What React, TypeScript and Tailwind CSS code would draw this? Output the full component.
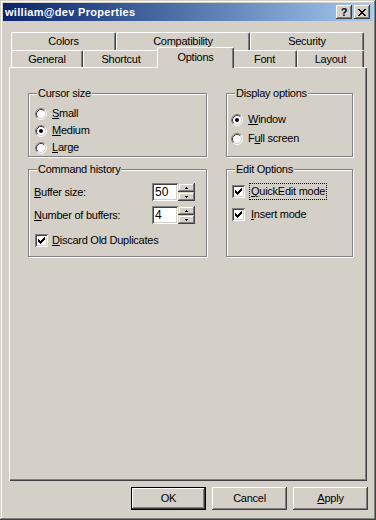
import React from 'react';

function Radio({ checked }: { checked?: boolean }) {
  return (
    <svg width="12" height="12" viewBox="0 0 12 12" className="shrink-0">
      <circle cx="6" cy="6" r="4.5" fill="#ffffff" />
      <path d="M2.11 9.89A5.5 5.5 0 0 1 9.89 2.11" stroke="#808080" fill="none" />
      <path d="M9.89 2.11A5.5 5.5 0 0 1 2.11 9.89" stroke="#ffffff" fill="none" />
      <path d="M2.82 9.18A4.5 4.5 0 0 1 9.18 2.82" stroke="#404040" fill="none" />
      <path d="M9.18 2.82A4.5 4.5 0 0 1 2.82 9.18" stroke="#d4d0c8" fill="none" />
      {checked && <circle cx="6" cy="6" r="2" fill="#000000" />}
    </svg>
  );
}

function Check() {
  return (
    <div className="w-[13px] h-[13px] shrink-0 bg-white flex items-center justify-center shadow-[inset_1px_1px_#808080,inset_-1px_-1px_#ffffff,inset_2px_2px_#404040,inset_-2px_-2px_#d4d0c8]">
      <svg width="7" height="7" viewBox="0 0 7 7" shapeRendering="crispEdges">
        <path
          fill="#000"
          d="M6 0h1v1h-1z M5 1h2v1h-2z M0 2h1v1h-1z M4 2h3v1h-3z M0 3h2v1h-2z M3 3h3v1h-3z M0 4h5v1h-5z M1 5h3v1h-3z M2 6h1v1h-1z"
        />
      </svg>
    </div>
  );
}

function Group({
  title,
  className,
  children,
}: {
  title: string;
  className: string;
  children?: React.ReactNode;
}) {
  return (
    <div className={`relative border border-[#808080] shadow-[inset_1px_1px_#ffffff,1px_1px_#ffffff] ${className}`}>
      <span className="absolute left-[8px] -top-[7px] px-[1px] bg-[#d4d0c8] leading-[13px]">{title}</span>
      {children}
    </div>
  );
}

function SpinHalf({ up }: { up?: boolean }) {
  return (
    <div className="h-[9px] flex items-center justify-center bg-[#d4d0c8] shadow-[inset_-1px_-1px_#404040,inset_1px_1px_#d4d0c8,inset_-2px_-2px_#808080,inset_2px_2px_#ffffff]">
      <svg width="3" height="2" viewBox="0 0 3 2" shapeRendering="crispEdges">
        <path fill="#000" d={up ? 'M1 0h1v1h-1z M0 1h3v1h-3z' : 'M0 0h3v1h-3z M1 1h1v1h-1z'} />
      </svg>
    </div>
  );
}

function SpinEdit({ value }: { value: string }) {
  return (
    <div className="flex">
      <div className="w-[26px] h-[18px] bg-white flex items-center pl-[3px] shadow-[inset_1px_1px_#808080,inset_-1px_-1px_#ffffff,inset_2px_2px_#404040,inset_-2px_-2px_#d4d0c8]">
        <span className="text-[12px] tracking-normal">{value}</span>
      </div>
      <div className="w-[17px] flex flex-col">
        <SpinHalf up />
        <SpinHalf />
      </div>
    </div>
  );
}

const tabBase =
  'flex items-center justify-center bg-[#d4d0c8] border-t border-l border-white border-r border-r-[#404040] rounded-tl-[2px] rounded-tr-[2px] shadow-[inset_-1px_0_#808080]';

export default function App() {
  return (
    <div className="w-[376px] h-[520px] bg-[#d4d0c8] p-[3px] flex flex-col text-black text-[11px] leading-[13px] tracking-[-0.25px] [font-family:'Liberation_Sans',Arial,sans-serif] shadow-[inset_-1px_-1px_#404040,inset_1px_1px_#d4d0c8,inset_-2px_-2px_#808080,inset_2px_2px_#ffffff]">
      {/* Title bar */}
      <div className="h-[18px] shrink-0 flex items-center justify-between bg-linear-to-r from-[#0a246a] to-[#a6caf0] pl-[2px] pr-[3px]">
        <span className="text-white font-bold text-[11px] tracking-[0.3px]">william@dev Properties</span>
        <div className="flex gap-[2px]">
          <div className="w-[16px] h-[14px] flex items-center justify-center bg-[#d4d0c8] shadow-[inset_-1px_-1px_#404040,inset_1px_1px_#ffffff,inset_-2px_-2px_#808080]">
            <span className="font-bold text-[11px] leading-[11px] tracking-normal">?</span>
          </div>
          <div className="w-[16px] h-[14px] flex items-center justify-center bg-[#d4d0c8] shadow-[inset_-1px_-1px_#404040,inset_1px_1px_#ffffff,inset_-2px_-2px_#808080]">
            <svg width="8" height="7" viewBox="0 0 8 7" shapeRendering="crispEdges">
              <path
                fill="#000"
                d="M0 0h2v1h-2z M6 0h2v1h-2z M1 1h2v1h-2z M5 1h2v1h-2z M2 2h4v1h-4z M3 3h2v1h-2z M2 4h4v1h-4z M1 5h2v1h-2z M5 5h2v1h-2z M0 6h2v1h-2z M6 6h2v1h-2z"
              />
            </svg>
          </div>
        </div>
      </div>

      {/* Back row of tabs */}
      <div className="ml-[8px] mt-[11px] flex h-[18px] shrink-0">
        <div className={`${tabBase} w-[105px]`}>Colors</div>
        <div className={`${tabBase} w-[134px]`}>Compatibility</div>
        <div className={`${tabBase} w-[114px]`}>Security</div>
      </div>

      {/* Front row of tabs */}
      <div className="ml-[8px] flex h-[17px] items-end shrink-0">
        <div className={`${tabBase} w-[72px] h-[17px]`}>General</div>
        <div className={`${tabBase} w-[76px] h-[17px]`}>Shortcut</div>
        <div className={`${tabBase} relative z-10 w-[77px] h-[21px] -mx-[2px] -mb-[1px] pb-[1px]`}>Options</div>
        <div className={`${tabBase} w-[65px] h-[17px]`}>Font</div>
        <div className={`${tabBase} w-[67px] h-[17px]`}>Layout</div>
      </div>

      {/* Panel */}
      <div className="ml-[6px] w-[358px] h-[414px] shrink-0 pt-[26px] pl-[19px] shadow-[inset_1px_1px_#ffffff,inset_-1px_-1px_#404040,inset_-2px_-2px_#808080]">
        <div className="grid grid-cols-[179px_127px] grid-rows-[64px_88px] gap-x-[19px] gap-y-[12px]">
          <Group title="Cursor size" className="pt-[11px] pl-[6px]">
            <div className="flex items-center h-[17px] gap-[5px]">
              <Radio />
              <span>
                <u>S</u>mall
              </span>
            </div>
            <div className="flex items-center h-[17px] gap-[5px]">
              <Radio checked />
              <span>
                <u>M</u>edium
              </span>
            </div>
            <div className="flex items-center h-[17px] gap-[5px]">
              <Radio />
              <span>
                <u>L</u>arge
              </span>
            </div>
          </Group>

          <Group title="Display options" className="pt-[16px] pl-[4px]">
            <div className="flex items-center h-[19px] gap-[5px]">
              <Radio checked />
              <span>
                <u>W</u>indow
              </span>
            </div>
            <div className="flex items-center h-[19px] gap-[5px]">
              <Radio />
              <span>
                F<u>u</u>ll screen
              </span>
            </div>
          </Group>

          <Group title="Command history" className="pt-[13px] pl-[5px] pr-[11px]">
            <div className="flex items-center justify-between h-[18px]">
              <span>
                <u>B</u>uffer size:
              </span>
              <SpinEdit value="50" />
            </div>
            <div className="flex items-center justify-between h-[18px] mt-[5px]">
              <span>
                <u>N</u>umber of buffers:
              </span>
              <SpinEdit value="4" />
            </div>
            <div className="flex items-center h-[17px] mt-[8px] ml-[1px] gap-[4px]">
              <Check />
              <span>
                <u>D</u>iscard Old Duplicates
              </span>
            </div>
          </Group>

          <Group title="Edit Options" className="pt-[10px] pl-[5px]">
            <div className="flex items-center h-[23px] gap-[4px]">
              <Check />
              <span className="border border-dotted border-black px-[1px] py-[1px]">
                <u>Q</u>uickEdit mode
              </span>
            </div>
            <div className="flex items-center h-[23px] gap-[4px]">
              <Check />
              <span className="border border-transparent px-[1px] py-[1px]">
                <u>I</u>nsert mode
              </span>
            </div>
          </Group>
        </div>
      </div>

      {/* Buttons */}
      <div className="mt-[6px] flex justify-end gap-[6px] pr-[5px] shrink-0">
        <div className="w-[75px] h-[23px] border border-black flex items-center justify-center shadow-[inset_-1px_-1px_#404040,inset_1px_1px_#ffffff,inset_-2px_-2px_#808080]">
          OK
        </div>
        <div className="w-[75px] h-[23px] flex items-center justify-center shadow-[inset_-1px_-1px_#404040,inset_1px_1px_#ffffff,inset_-2px_-2px_#808080]">
          Cancel
        </div>
        <div className="w-[75px] h-[23px] flex items-center justify-center shadow-[inset_-1px_-1px_#404040,inset_1px_1px_#ffffff,inset_-2px_-2px_#808080]">
          <span>
            <u>A</u>pply
          </span>
        </div>
      </div>
    </div>
  );
}
